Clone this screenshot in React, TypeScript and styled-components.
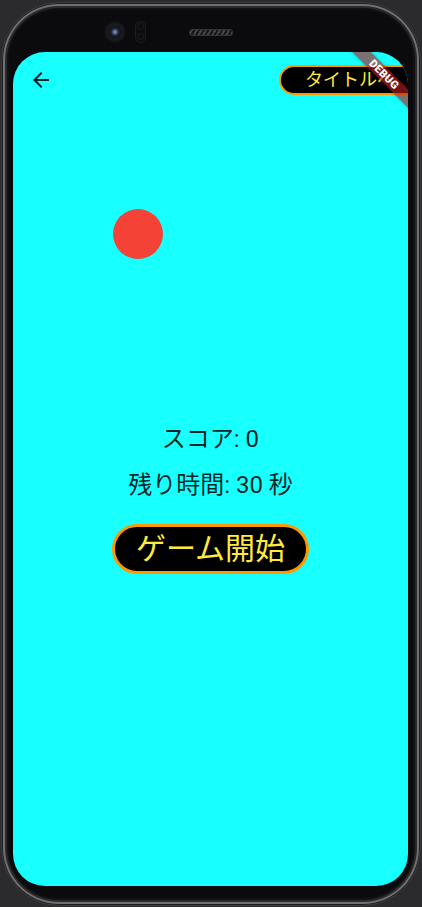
import React from "react";
import styled, { createGlobalStyle } from "styled-components";

const GlobalStyle = createGlobalStyle`
  html, body {
    margin: 0;
    padding: 0;
    background: #2b2b2d;
  }
  body {
    font-family: "Roboto", "Noto Sans CJK JP", sans-serif;
  }
  * { box-sizing: border-box; }
`;

const Device = styled.div`
  width: 420px;
  height: 904px;
  margin: 2px 1px 1px 1px;
  border-radius: 58px;
  background: #0b0b0d;
  border: 1px solid #3c3c3e;
  box-shadow:
    inset 0 0 0 1px #1c1c1e,
    inset 0 0 0 3px #707072,
    inset 0 0 0 5px #2a2a2c,
    inset 0 0 0 7px #111113;
  display: flex;
  flex-direction: column;
  padding: 0 11px 0 11px;
`;

const Bezel = styled.div`
  height: 49px;
  padding: 8px 0 0 91px;
  display: flex;
  align-items: center;
`;

const Camera = styled.div`
  width: 22px;
  height: 22px;
  border-radius: 50%;
  background: radial-gradient(
    circle at 50% 50%,
    #6a7ab0 0 1.5px,
    #2a2f45 3px,
    #15161c 5px,
    #1a1a1f 8px,
    #0f0f12 11px
  );
`;

const Sensor = styled.div`
  width: 11px;
  height: 22px;
  margin-left: 9px;
  border-radius: 6px;
  border: 1px solid #1e1e22;
  background: #0d0d10;
  display: flex;
  flex-direction: column;
  justify-content: space-around;
  align-items: center;
`;

const SensorDot = styled.div`
  width: 7px;
  height: 7px;
  border-radius: 50%;
  border: 1px solid #1c1c20;
`;

const Speaker = styled.div`
  width: 44px;
  height: 7px;
  margin-left: 43px;
  margin-top: 1px;
  border-radius: 3px;
  border: 1px solid #333335;
  background: repeating-linear-gradient(
    -60deg,
    #434345 0 2px,
    #18181a 2px 4px
  );
`;

const Screen = styled.div`
  position: relative;
  width: 395px;
  height: 834px;
  border-radius: 32px;
  overflow: hidden;
  background: #18ffff;
  display: flex;
  flex-direction: column;
`;

const AppBar = styled.div`
  height: 56px;
  flex-shrink: 0;
  display: flex;
  align-items: center;
`;

const Leading = styled.div`
  width: 56px;
  height: 56px;
  display: flex;
  align-items: center;
  justify-content: center;
`;

const TitleButton = styled.button`
  margin-left: auto;
  margin-right: -13px;
  flex-shrink: 0;
  height: 30px;
  padding: 0 24px;
  border: 2px solid #ff9800;
  border-radius: 15px;
  background: #000;
  color: #ffeb3b;
  font-family: "Roboto", "Noto Sans CJK JP", sans-serif;
  font-size: 18px;
  line-height: 26px;
  white-space: nowrap;
`;

const Body = styled.div`
  position: relative;
  flex: 1;
  display: flex;
  flex-direction: column;
  align-items: center;
  justify-content: center;
  padding-top: 3px;
`;

const Target = styled.div`
  position: absolute;
  left: 100px;
  top: 101px;
  width: 50px;
  height: 50px;
  border-radius: 50%;
  background: #f44336;
`;

const InfoText = styled.div<{ $gap: number }>`
  font-size: 24px;
  line-height: 32px;
  color: rgba(0, 0, 0, 0.87);
  margin-bottom: ${(p) => p.$gap}px;
  white-space: nowrap;
`;

const StartButton = styled.button`
  height: 50px;
  padding: 0 21px;
  border: 3px solid #ff9800;
  border-radius: 25px;
  background: #000;
  color: #ffeb3b;
  font-family: "Roboto", "Noto Sans CJK JP", sans-serif;
  font-size: 30px;
  line-height: 44px;
  white-space: nowrap;
`;

const DebugRibbon = styled.div`
  position: absolute;
  left: 301px;
  top: 16px;
  width: 140px;
  height: 13px;
  transform: rotate(45deg);
  background: rgba(183, 28, 28, 0.627);
  box-shadow: 0 0 4px rgba(0, 0, 0, 0.25);
  color: #fff;
  font-family: "Roboto", "DejaVu Sans", sans-serif;
  font-weight: 900;
  font-size: 11px;
  line-height: 13px;
  text-align: center;
  letter-spacing: 0.3px;
  pointer-events: none;
  z-index: 2;
`;

const BackArrow = () => (
  <svg width="24" height="24" viewBox="0 0 24 24" aria-hidden="true">
    <path
      d="M20 11H7.83l5.59-5.59L12 4l-8 8 8 8 1.41-1.41L7.83 13H20v-2z"
      fill="rgba(0,0,0,0.87)"
    />
  </svg>
);

export default function App() {
  return (
    <>
      <GlobalStyle />
      <Device>
        <Bezel>
          <Camera />
          <Sensor>
            <SensorDot />
            <SensorDot />
          </Sensor>
          <Speaker />
        </Bezel>
        <Screen>
          <AppBar>
            <Leading>
              <BackArrow />
            </Leading>
            <TitleButton>タイトルへ</TitleButton>
          </AppBar>
          <Body>
            <Target />
            <InfoText $gap={14}>スコア: 0</InfoText>
            <InfoText $gap={23}>残り時間: 30 秒</InfoText>
            <StartButton>ゲーム開始</StartButton>
          </Body>
          <DebugRibbon>DEBUG</DebugRibbon>
        </Screen>
      </Device>
    </>
  );
}
